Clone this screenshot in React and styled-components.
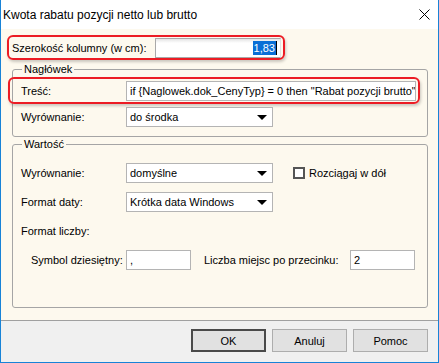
import React from "react";
import styled, { createGlobalStyle } from "styled-components";

const GlobalStyle = createGlobalStyle`
	html, body {
		margin: 0;
		padding: 0;
	}
	body {
		width: 439px;
		height: 363px;
		overflow: hidden;
		font-family: "Liberation Sans", Arial, sans-serif;
		font-size: 11px;
		color: #000000;
	}
`;

export default function App() {
	return (
		<>
			<GlobalStyle />
			<Window>
				<TitleBar>
					<span>Kwota rabatu pozycji netto lub brutto</span>
					<CloseIcon viewBox="0 0 11 11">
						<path d="M0.5 0.5 L10.5 10.5 M10.5 0.5 L0.5 10.5" stroke="#000" strokeWidth="1" />
					</CloseIcon>
				</TitleBar>
				<Content>
					<Highlight $width={278} $height={25} $ml={6} $pl={3}>
						<WidthLabel>Szerokość kolumny (w cm):</WidthLabel>
						<WidthInput>
							<Selected>1,83</Selected>
							<Caret />
						</WidthInput>
					</Highlight>

					<Group>
						<Legend>Nagłówek</Legend>
						<GroupBody $pb={9} $gap={3}>
							<Highlight $width={412} $height={27} $ml={-5} $pl={11}>
								<Label>Treść:</Label>
								<TextBox $width={290}>
									if {"{"}Naglowek.dok_CenyTyp{"}"} = 0 then "Rabat pozycji brutto" else "Rabat pozycji netto"
								</TextBox>
							</Highlight>
							<Row>
								<Label>Wyrównanie:</Label>
								<Select>do środka</Select>
							</Row>
						</GroupBody>
					</Group>

					<Group $mt={1}>
						<Legend>Wartość</Legend>
						<GroupBody $pb={37} $gap={9} $pt={12}>
							<Row>
								<Label>Wyrównanie:</Label>
								<Select>domyślne</Select>
								<CheckRow>
									<CheckBox />
									<span>Rozciągaj w dół</span>
								</CheckRow>
							</Row>
							<Row>
								<Label>Format daty:</Label>
								<Select>Krótka data Windows</Select>
							</Row>
							<Row>
								<Label>Format liczby:</Label>
							</Row>
							<Row $indent={18}>
								<SubLabel $width={95}>Symbol dziesiętny:</SubLabel>
								<TextBox $width={65}>,</TextBox>
								<SubLabel $width={146} $ml={13}>Liczba miejsc po przecinku:</SubLabel>
								<TextBox $width={65}>2</TextBox>
							</Row>
						</GroupBody>
					</Group>
				</Content>
				<Footer>
					<Button $default>OK</Button>
					<Button>Anuluj</Button>
					<Button>Pomoc</Button>
				</Footer>
			</Window>
		</>
	);
}

function Select({ children }) {
	return (
		<SelectBox>
			<span>{children}</span>
			<Arrow />
		</SelectBox>
	);
}

const Window = styled.div`
	width: 439px;
	height: 363px;
	box-sizing: border-box;
	border: 1px solid #1883d7;
	border-top: none;
	background: #f0f0f0;
	display: flex;
	flex-direction: column;
`;

const TitleBar = styled.div`
	height: 29px;
	flex-shrink: 0;
	background: #ffffff;
	display: flex;
	align-items: center;
	justify-content: space-between;
	padding: 0 8px 0 2px;
	font-size: 12px;
	color: #000000;
`;

const CloseIcon = styled.svg`
	width: 11px;
	height: 11px;
	margin-top: -1px;
`;

const Content = styled.div`
	flex: 1;
	background: #fdf9ee;
	border-bottom: 1px solid #a0a0a0;
	padding: 6px 10px 0 0;
	display: flex;
	flex-direction: column;
`;

const Highlight = styled.div`
	box-sizing: border-box;
	width: ${(p) => p.$width}px;
	height: ${(p) => p.$height}px;
	margin-left: ${(p) => p.$ml}px;
	padding-left: ${(p) => p.$pl}px;
	padding-right: 2px;
	border: 2px solid #ec1c24;
	border-radius: 6px;
	box-shadow: 1px 2px 3px rgba(0, 0, 0, 0.2);
	display: flex;
	align-items: center;
	justify-content: space-between;
`;

const WidthLabel = styled.span`
	white-space: nowrap;
`;

const WidthInput = styled.div`
	box-sizing: border-box;
	width: 126px;
	height: 20px;
	background: linear-gradient(#e4e4e4, #ffffff 4px);
	border: 1px solid #a9a9a9;
	border-right-color: #e2e2e2;
	display: flex;
	align-items: center;
	justify-content: flex-end;
	padding-right: 3px;
`;

const Selected = styled.span`
	background: #0a6fd6;
	color: #ffffff;
	line-height: 14px;
	padding: 0 1px;
`;

const Caret = styled.span`
	width: 1px;
	height: 14px;
	background: #000000;
`;

const Group = styled.fieldset`
	margin: ${(p) => p.$mt || 3}px 0 0 11px;
	padding: 0;
	width: 416px;
	box-sizing: border-box;
	border: 1px solid #a5a5a5;
	border-radius: 3px;
	min-width: 0;
`;

const Legend = styled.legend`
	margin-left: 9px;
	padding: 0 2px;
	line-height: 13px;
	font-size: 11px;
	color: #000000;
`;

const GroupBody = styled.div`
	display: flex;
	flex-direction: column;
	gap: ${(p) => p.$gap}px;
	padding: ${(p) => p.$pt || 1}px 0 ${(p) => p.$pb}px 0;
`;

const Row = styled.div`
	height: 20px;
	display: flex;
	align-items: center;
	padding-left: ${(p) => p.$indent || 8}px;
`;

const Label = styled.span`
	width: 105px;
	flex-shrink: 0;
	white-space: nowrap;
`;

const SubLabel = styled.span`
	width: ${(p) => p.$width}px;
	margin-left: ${(p) => p.$ml || 0}px;
	flex-shrink: 0;
	white-space: nowrap;
`;

const TextBox = styled.div`
	box-sizing: border-box;
	width: ${(p) => p.$width}px;
	height: 20px;
	flex-shrink: 0;
	background: #ffffff;
	border: 1px solid #b4b4b4;
	padding: 0 3px;
	line-height: 18px;
	white-space: nowrap;
	overflow: hidden;
`;

const SelectBox = styled.div`
	box-sizing: border-box;
	width: 147px;
	height: 20px;
	flex-shrink: 0;
	background: #ffffff;
	border: 1px solid #b4b4b4;
	padding: 0 5px 0 3px;
	display: flex;
	align-items: center;
	justify-content: space-between;
	white-space: nowrap;
`;

const Arrow = styled.span`
	width: 0;
	height: 0;
	border-left: 5px solid transparent;
	border-right: 5px solid transparent;
	border-top: 5px solid #000000;
`;

const CheckRow = styled.label`
	display: flex;
	align-items: center;
	gap: 4px;
	margin-left: 20px;
`;

const CheckBox = styled.span`
	box-sizing: border-box;
	width: 12px;
	height: 12px;
	border: 2px solid #555555;
	background: #ffffff;
`;

const Footer = styled.div`
	height: 41px;
	flex-shrink: 0;
	display: flex;
	justify-content: flex-end;
	align-items: flex-start;
	gap: 6px;
	padding: 8px 10px 0 0;
	box-sizing: border-box;
`;

const Button = styled.div`
	box-sizing: border-box;
	width: 75px;
	height: 23px;
	background: #e1e1e1;
	border: ${(p) => (p.$default ? "2px solid #4a4a4a" : "1px solid #adadad")};
	display: flex;
	align-items: center;
	justify-content: center;
	font-size: 11px;
`;
